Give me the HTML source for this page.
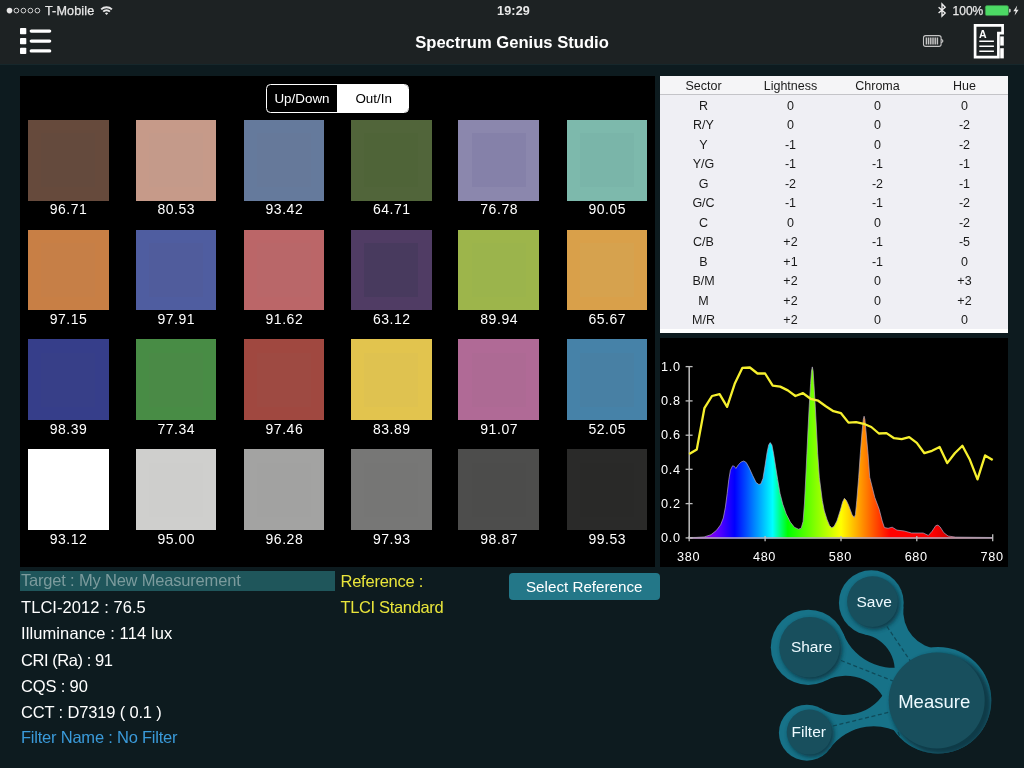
<!DOCTYPE html>
<html lang="en"><head><meta charset="utf-8"><title>Spectrum Genius Studio</title>
<style>
*{box-sizing:border-box;margin:0;padding:0}
html,body{width:1024px;height:768px;overflow:hidden;background:#0d1b1f;font-family:"Liberation Sans",sans-serif;color:#fff}
.abs,.sw,.sv,.tr,.th{position:absolute}
#top{position:absolute;left:0;top:0;width:1024px;height:64px;background:#1d2223}
#topline{position:absolute;left:0;top:64px;width:1024px;height:1px;background:#16272b}
.st{position:absolute;top:4px;font-size:12.6px;line-height:14px;color:#e8e8e8;white-space:nowrap;letter-spacing:0.12px;-webkit-text-stroke:0.25px #e8e8e8}
#title{position:absolute;left:0;width:1024px;top:32.5px;text-align:center;font-size:16.6px;line-height:20px;font-weight:bold;color:#fff}
#panel{position:absolute;left:20px;top:76px;width:634.5px;height:491px;background:#000}
.sw{width:80.8px;height:80.8px}
.sw i{position:absolute;left:13.4px;top:13.4px;width:54px;height:54px}
.sv{width:101px;text-align:center;font-size:14px;line-height:16px;color:#fff;letter-spacing:0.55px;text-indent:0.55px}
#seg{position:absolute;left:266px;top:84px;width:143px;height:29px;border:1px solid #fff;border-radius:4.5px;overflow:hidden;font-size:13.4px;line-height:27px}
#seg b{font-weight:normal;position:absolute;top:0;height:27px;text-align:center}
#seg .l{left:0;width:70px;color:#fff}
#seg .r{left:70px;width:71px;background:#fff;color:#000;padding-left:2.4px}
#table{position:absolute;left:660px;top:76px;width:348px;height:257px;background:#fff;overflow:hidden;color:#1a1a1a;font-size:12.5px}
#tbody{position:absolute;left:0;top:19px;width:348px;height:234px;background:#efeff4}
.th{left:0;top:0;width:348px;height:19px;background:#f5f5f7;border-bottom:1px solid #c4c4c8;line-height:19px}
.tr{left:0;width:348px;height:19.5px;line-height:19.5px}
.th span,.tr span{display:inline-block;width:87px;text-align:center;position:relative;top:1px}
#chart{position:absolute;left:660px;top:338px;width:348px;height:228.6px;background:#000}
.info{position:absolute;left:21px;font-size:16.5px;line-height:20px;white-space:nowrap;color:#fff}
#tgt{position:absolute;left:20px;top:571px;width:315px;height:20px;background:#1f565b}
#btn{position:absolute;left:508.5px;top:572.5px;width:151.5px;height:27.5px;border-radius:4px;background:#237788;color:#fff;font-size:15.2px;line-height:28.5px;text-align:center}
#wrap{position:absolute;left:0;top:0;width:1024px;height:768px;overflow:hidden;will-change:transform}
</style></head><body><div id="wrap">
<div id="top"></div><div id="topline"></div>
<!-- status bar -->
<svg class="abs" style="left:0;top:0" width="1024" height="20" viewBox="0 0 1024 20">
<circle cx="9.5" cy="10.6" r="2.8" fill="#e6e6e6"/>
<g fill="none" stroke="#e6e6e6" stroke-width="0.9"><circle cx="16.4" cy="10.6" r="2.35"/><circle cx="23.4" cy="10.6" r="2.35"/><circle cx="30.4" cy="10.6" r="2.35"/><circle cx="37.4" cy="10.6" r="2.35"/></g>
<g fill="none" stroke="#e6e6e6" stroke-width="1.9" stroke-linecap="butt"><path d="M101.2,9.4 A7.6,7.6 0 0 1 111.9,9.4"/><path d="M103.2,11.7 A4.7,4.7 0 0 1 109.9,11.7"/></g><path d="M104.9,13.3 A2.3,2.3 0 0 1 108.2,13.3 L106.55,15 Z" fill="#e6e6e6"/>
<path d="M938.6,7.2 L945.2,13 L942,16.2 L942,4 L945.2,7.2 L938.6,13" fill="none" stroke="#eeeeee" stroke-width="1.35" stroke-linejoin="miter"/>
<rect x="985.3" y="5.6" width="23.2" height="10" rx="1.6" fill="#4cd964"/><rect x="985.3" y="5.6" width="23.2" height="10" rx="1.6" fill="none" stroke="#3a8a48" stroke-width="0.6"/><path d="M1009.2,8.8 h0.6 a0.8,0.8 0 0 1 0.8,0.8 v2 a0.8,0.8 0 0 1 -0.8,0.8 h-0.6 z" fill="#e6e6e6"/>
<path d="M1017.2,5.6 L1013.3,11.3 L1015.7,11.3 L1014.6,15.6 L1018.6,9.8 L1016.2,9.8 Z" fill="#e6e6e6"/>
</svg>
<div class="st" style="left:45px">T-Mobile</div>
<div class="st" style="left:0;width:1027px;text-align:center;font-weight:bold;-webkit-text-stroke:0">19:29</div>
<div class="st" style="left:952.6px;font-size:12px;letter-spacing:0">100%</div>
<!-- nav -->
<svg class="abs" style="left:0;top:20px" width="1024" height="44" viewBox="0 20 1024 44">
<g fill="#fff"><rect x="20" y="28" width="6.3" height="6.3" rx="0.8"/><rect x="20" y="38" width="6.3" height="6.3" rx="0.8"/><rect x="20" y="47.8" width="6.3" height="6.3" rx="0.8"/>
<rect x="29.6" y="29.4" width="21.7" height="3.4" rx="1.7"/><rect x="29.6" y="39.4" width="21.7" height="3.4" rx="1.7"/><rect x="29.6" y="49.2" width="21.7" height="3.4" rx="1.7"/></g>
<g fill="none" stroke="#c4c4c4" stroke-width="1.1"><rect x="923.5" y="35.6" width="17.6" height="10.8" rx="2.2"/><path d="M941.1,39.2 l1.6,1 v1.6 l-1.6,1"/></g>
<g stroke="#c4c4c4" stroke-width="1.1"><path d="M926.4,37.6v6.8M928.6,37.6v6.8M930.8,37.6v6.8M933,37.6v6.8M935.2,37.6v6.8M937.4,37.6v6.8" stroke-width="1.5"/></g>
<path d="M975.1,25.3 H1002.6 V33.2 H998.4 V57.1 H975.1 Z" fill="none" stroke="#fff" stroke-width="2.7" stroke-linejoin="miter"/>
<g fill="#fff"><rect x="1000.2" y="36.4" width="3.6" height="9.2"/><rect x="1000.2" y="48.2" width="3.6" height="10.2"/></g>
<g stroke="#fff" stroke-width="1.6"><path d="M979.3,41.2h14.6M979.3,46.2h14.6M979.3,51.2h14.6"/></g>
<text x="982.8" y="37.6" font-family="Liberation Sans, sans-serif" font-weight="bold" font-size="10.5" fill="#fff" text-anchor="middle">A</text>
</svg>
<div id="title">Spectrum Genius Studio</div>
<!-- left panel -->
<div id="panel"></div>
<div id="seg"><b class="l">Up/Down</b><b class="r">Out/In</b></div>
<div class="sw" style="left:27.8px;top:120px;background:#664a3c"><i style="background:#644a3d"></i></div>
<div class="sv" style="left:17.8px;top:201.10000000000002px">96.71</div>
<div class="sw" style="left:135.5px;top:120px;background:#c69a89"><i style="background:#c49a8a"></i></div>
<div class="sv" style="left:125.5px;top:201.10000000000002px">80.53</div>
<div class="sw" style="left:243.6px;top:120px;background:#657a9c"><i style="background:#66799a"></i></div>
<div class="sv" style="left:233.6px;top:201.10000000000002px">93.42</div>
<div class="sw" style="left:351px;top:120px;background:#51653a"><i style="background:#4f6438"></i></div>
<div class="sv" style="left:341px;top:201.10000000000002px">64.71</div>
<div class="sw" style="left:458.4px;top:120px;background:#8b87ad"><i style="background:#8581a9"></i></div>
<div class="sv" style="left:448.4px;top:201.10000000000002px">76.78</div>
<div class="sw" style="left:566.5px;top:120px;background:#7db9ac"><i style="background:#7ab5a9"></i></div>
<div class="sv" style="left:556.5px;top:201.10000000000002px">90.05</div>
<div class="sw" style="left:27.8px;top:229.7px;background:#c87f45"><i style="background:#c67f47"></i></div>
<div class="sv" style="left:17.8px;top:310.8px">97.15</div>
<div class="sw" style="left:135.5px;top:229.7px;background:#4f5da0"><i style="background:#505c9c"></i></div>
<div class="sv" style="left:125.5px;top:310.8px">97.91</div>
<div class="sw" style="left:243.6px;top:229.7px;background:#bb6668"><i style="background:#b96769"></i></div>
<div class="sv" style="left:233.6px;top:310.8px">91.62</div>
<div class="sw" style="left:351px;top:229.7px;background:#503c64"><i style="background:#483a5e"></i></div>
<div class="sv" style="left:341px;top:310.8px">63.12</div>
<div class="sw" style="left:458.4px;top:229.7px;background:#9db54b"><i style="background:#9bb44c"></i></div>
<div class="sv" style="left:448.4px;top:310.8px">89.94</div>
<div class="sw" style="left:566.5px;top:229.7px;background:#d9a04a"><i style="background:#d6a24e"></i></div>
<div class="sv" style="left:556.5px;top:310.8px">65.67</div>
<div class="sw" style="left:27.8px;top:339.4px;background:#363e8a"><i style="background:#373f88"></i></div>
<div class="sv" style="left:17.8px;top:420.5px">98.39</div>
<div class="sw" style="left:135.5px;top:339.4px;background:#488c45"><i style="background:#4a8a46"></i></div>
<div class="sv" style="left:125.5px;top:420.5px">77.34</div>
<div class="sw" style="left:243.6px;top:339.4px;background:#a04840"><i style="background:#9e4a42"></i></div>
<div class="sv" style="left:233.6px;top:420.5px">97.46</div>
<div class="sw" style="left:351px;top:339.4px;background:#e2c44e"><i style="background:#dfc250"></i></div>
<div class="sv" style="left:341px;top:420.5px">83.89</div>
<div class="sw" style="left:458.4px;top:339.4px;background:#b06a96"><i style="background:#ad6a94"></i></div>
<div class="sv" style="left:448.4px;top:420.5px">91.07</div>
<div class="sw" style="left:566.5px;top:339.4px;background:#4682a8"><i style="background:#4880a4"></i></div>
<div class="sv" style="left:556.5px;top:420.5px">52.05</div>
<div class="sw" style="left:27.8px;top:449.4px;background:#ffffff"><i style="background:#ffffff"></i></div>
<div class="sv" style="left:17.8px;top:530.4999999999999px">93.12</div>
<div class="sw" style="left:135.5px;top:449.4px;background:#cfcfcd"><i style="background:#cececc"></i></div>
<div class="sv" style="left:125.5px;top:530.4999999999999px">95.00</div>
<div class="sw" style="left:243.6px;top:449.4px;background:#a3a3a2"><i style="background:#a2a2a1"></i></div>
<div class="sv" style="left:233.6px;top:530.4999999999999px">96.28</div>
<div class="sw" style="left:351px;top:449.4px;background:#777776"><i style="background:#767675"></i></div>
<div class="sv" style="left:341px;top:530.4999999999999px">97.93</div>
<div class="sw" style="left:458.4px;top:449.4px;background:#4d4d4c"><i style="background:#4c4c4b"></i></div>
<div class="sv" style="left:448.4px;top:530.4999999999999px">98.87</div>
<div class="sw" style="left:566.5px;top:449.4px;background:#2a2a29"><i style="background:#292928"></i></div>
<div class="sv" style="left:556.5px;top:530.4999999999999px">99.53</div>
<!-- table -->
<div id="table"><div id="tbody"></div>
<div class="th"><span>Sector</span><span>Lightness</span><span>Chroma</span><span>Hue</span></div>
<div class="tr" style="top:19.60px"><span>R</span><span>0</span><span>0</span><span>0</span></div>
<div class="tr" style="top:39.10px"><span>R/Y</span><span>0</span><span>0</span><span>-2</span></div>
<div class="tr" style="top:58.60px"><span>Y</span><span>-1</span><span>0</span><span>-2</span></div>
<div class="tr" style="top:78.10px"><span>Y/G</span><span>-1</span><span>-1</span><span>-1</span></div>
<div class="tr" style="top:97.60px"><span>G</span><span>-2</span><span>-2</span><span>-1</span></div>
<div class="tr" style="top:117.10px"><span>G/C</span><span>-1</span><span>-1</span><span>-2</span></div>
<div class="tr" style="top:136.60px"><span>C</span><span>0</span><span>0</span><span>-2</span></div>
<div class="tr" style="top:156.10px"><span>C/B</span><span>+2</span><span>-1</span><span>-5</span></div>
<div class="tr" style="top:175.60px"><span>B</span><span>+1</span><span>-1</span><span>0</span></div>
<div class="tr" style="top:195.10px"><span>B/M</span><span>+2</span><span>0</span><span>+3</span></div>
<div class="tr" style="top:214.60px"><span>M</span><span>+2</span><span>0</span><span>+2</span></div>
<div class="tr" style="top:234.10px"><span>M/R</span><span>+2</span><span>0</span><span>0</span></div>
</div>
<!-- chart -->
<div id="chart"></div>
<svg class="abs" style="left:0;top:0" width="1024" height="768" viewBox="0 0 1024 768">
<defs><linearGradient id="sg" gradientUnits="userSpaceOnUse" x1="689.2" x2="992.70" y1="0" y2="0"><stop offset="0.0000" stop-color="rgb(204,0,204)"/><stop offset="0.0125" stop-color="rgb(193,0,210)"/><stop offset="0.0250" stop-color="rgb(181,0,217)"/><stop offset="0.0375" stop-color="rgb(167,0,223)"/><stop offset="0.0500" stop-color="rgb(153,0,230)"/><stop offset="0.0625" stop-color="rgb(138,0,236)"/><stop offset="0.0750" stop-color="rgb(121,0,242)"/><stop offset="0.0875" stop-color="rgb(104,0,249)"/><stop offset="0.1000" stop-color="rgb(85,0,255)"/><stop offset="0.1125" stop-color="rgb(64,0,255)"/><stop offset="0.1250" stop-color="rgb(42,0,255)"/><stop offset="0.1375" stop-color="rgb(21,0,255)"/><stop offset="0.1500" stop-color="rgb(0,0,255)"/><stop offset="0.1625" stop-color="rgb(0,26,255)"/><stop offset="0.1750" stop-color="rgb(0,51,255)"/><stop offset="0.1875" stop-color="rgb(0,76,255)"/><stop offset="0.2000" stop-color="rgb(0,102,255)"/><stop offset="0.2125" stop-color="rgb(0,128,255)"/><stop offset="0.2250" stop-color="rgb(0,153,255)"/><stop offset="0.2375" stop-color="rgb(0,178,255)"/><stop offset="0.2500" stop-color="rgb(0,204,255)"/><stop offset="0.2625" stop-color="rgb(0,230,255)"/><stop offset="0.2750" stop-color="rgb(0,255,255)"/><stop offset="0.2875" stop-color="rgb(0,255,191)"/><stop offset="0.3000" stop-color="rgb(0,255,128)"/><stop offset="0.3125" stop-color="rgb(0,255,64)"/><stop offset="0.3250" stop-color="rgb(0,255,0)"/><stop offset="0.3375" stop-color="rgb(18,255,0)"/><stop offset="0.3500" stop-color="rgb(36,255,0)"/><stop offset="0.3625" stop-color="rgb(55,255,0)"/><stop offset="0.3750" stop-color="rgb(73,255,0)"/><stop offset="0.3875" stop-color="rgb(91,255,0)"/><stop offset="0.4000" stop-color="rgb(109,255,0)"/><stop offset="0.4125" stop-color="rgb(128,255,0)"/><stop offset="0.4250" stop-color="rgb(146,255,0)"/><stop offset="0.4375" stop-color="rgb(164,255,0)"/><stop offset="0.4500" stop-color="rgb(182,255,0)"/><stop offset="0.4625" stop-color="rgb(200,255,0)"/><stop offset="0.4750" stop-color="rgb(219,255,0)"/><stop offset="0.4875" stop-color="rgb(237,255,0)"/><stop offset="0.5000" stop-color="rgb(255,255,0)"/><stop offset="0.5125" stop-color="rgb(255,235,0)"/><stop offset="0.5250" stop-color="rgb(255,216,0)"/><stop offset="0.5375" stop-color="rgb(255,196,0)"/><stop offset="0.5500" stop-color="rgb(255,177,0)"/><stop offset="0.5625" stop-color="rgb(255,157,0)"/><stop offset="0.5750" stop-color="rgb(255,137,0)"/><stop offset="0.5875" stop-color="rgb(255,118,0)"/><stop offset="0.6000" stop-color="rgb(255,98,0)"/><stop offset="0.6125" stop-color="rgb(255,78,0)"/><stop offset="0.6250" stop-color="rgb(255,59,0)"/><stop offset="0.6375" stop-color="rgb(255,39,0)"/><stop offset="0.6500" stop-color="rgb(255,20,0)"/><stop offset="0.6625" stop-color="rgb(255,0,0)"/><stop offset="0.6750" stop-color="rgb(255,0,0)"/><stop offset="0.6875" stop-color="rgb(255,0,0)"/><stop offset="0.7000" stop-color="rgb(255,0,0)"/><stop offset="0.7125" stop-color="rgb(255,0,0)"/><stop offset="0.7250" stop-color="rgb(255,0,0)"/><stop offset="0.7375" stop-color="rgb(255,0,0)"/><stop offset="0.7500" stop-color="rgb(255,0,0)"/><stop offset="0.7625" stop-color="rgb(255,0,0)"/><stop offset="0.7750" stop-color="rgb(255,0,0)"/><stop offset="0.7875" stop-color="rgb(255,0,0)"/><stop offset="0.8000" stop-color="rgb(255,0,0)"/><stop offset="0.8125" stop-color="rgb(244,0,0)"/><stop offset="0.8250" stop-color="rgb(233,0,0)"/><stop offset="0.8375" stop-color="rgb(222,0,0)"/><stop offset="0.8500" stop-color="rgb(210,0,0)"/><stop offset="0.8625" stop-color="rgb(199,0,0)"/><stop offset="0.8750" stop-color="rgb(188,0,0)"/><stop offset="0.8875" stop-color="rgb(177,0,0)"/><stop offset="0.9000" stop-color="rgb(166,0,0)"/><stop offset="0.9125" stop-color="rgb(155,0,0)"/><stop offset="0.9250" stop-color="rgb(143,0,0)"/><stop offset="0.9375" stop-color="rgb(132,0,0)"/><stop offset="0.9500" stop-color="rgb(121,0,0)"/><stop offset="0.9625" stop-color="rgb(110,0,0)"/><stop offset="0.9750" stop-color="rgb(99,0,0)"/><stop offset="0.9875" stop-color="rgb(88,0,0)"/><stop offset="1.0000" stop-color="rgb(76,0,0)"/></linearGradient></defs>
<path d="M689.2,538.4 L689.2,537.5 L696.0,537.4 L704.2,536.9 L711.0,534.7 L716.5,530.3 L720.6,524.8 L723.3,518.0 L725.4,507.1 L727.2,493.4 L728.8,479.7 L730.4,470.2 L732.6,465.8 L734.3,466.3 L735.9,468.5 L738.4,464.7 L741.1,462.0 L743.8,461.0 L746.3,462.6 L749.3,468.1 L752.7,475.6 L756.1,482.5 L758.9,484.5 L760.9,483.8 L763.0,478.4 L765.0,466.1 L767.1,452.4 L768.7,444.9 L770.2,442.6 L771.9,444.9 L773.6,453.8 L775.5,466.1 L777.7,479.7 L780.0,493.4 L782.8,504.3 L786.2,513.9 L790.3,522.1 L794.4,527.3 L798.5,529.2 L801.2,528.2 L803.1,521.5 L804.5,503.0 L805.8,477.0 L806.9,453.8 L808.0,430.0 L809.2,406.9 L810.6,383.4 L811.5,371.0 L812.3,366.9 L813.1,371.0 L813.9,383.4 L815.3,406.9 L816.5,430.0 L817.7,453.8 L819.3,477.2 L822.3,500.6 L824.3,510.8 L827.0,519.4 L829.5,525.5 L831.7,527.8 L834.0,526.5 L836.9,521.0 L840.4,510.0 L842.6,502.0 L844.4,498.3 L846.4,500.5 L848.6,505.3 L852.1,514.7 L854.2,517.5 L855.4,514.7 L856.8,500.6 L858.7,477.2 L860.3,453.8 L862.2,430.3 L863.3,419.5 L864.1,416.2 L864.9,419.5 L865.9,430.3 L868.0,453.8 L869.7,477.2 L870.9,481.9 L874.8,497.5 L879.2,509.3 L882.2,521.0 L884.4,527.6 L888.1,528.3 L892.2,527.2 L896.9,530.1 L904.2,531.0 L911.5,533.0 L923.2,533.0 L928.4,535.4 L932.0,531.3 L935.7,525.7 L937.9,525.1 L940.1,526.9 L943.8,532.7 L948.1,536.0 L955.5,537.1 L992.3,537.5 L992.3,538.4 Z" fill="url(#sg)"/>
<path d="M689.2,537.5 L696.0,537.4 L704.2,536.9 L711.0,534.7 L716.5,530.3 L720.6,524.8 L723.3,518.0 L725.4,507.1 L727.2,493.4 L728.8,479.7 L730.4,470.2 L732.6,465.8 L734.3,466.3 L735.9,468.5 L738.4,464.7 L741.1,462.0 L743.8,461.0 L746.3,462.6 L749.3,468.1 L752.7,475.6 L756.1,482.5 L758.9,484.5 L760.9,483.8 L763.0,478.4 L765.0,466.1 L767.1,452.4 L768.7,444.9 L770.2,442.6 L771.9,444.9 L773.6,453.8 L775.5,466.1 L777.7,479.7 L780.0,493.4 L782.8,504.3 L786.2,513.9 L790.3,522.1 L794.4,527.3 L798.5,529.2 L801.2,528.2 L803.1,521.5 L804.5,503.0 L805.8,477.0 L806.9,453.8 L808.0,430.0 L809.2,406.9 L810.6,383.4 L811.5,371.0 L812.3,366.9 L813.1,371.0 L813.9,383.4 L815.3,406.9 L816.5,430.0 L817.7,453.8 L819.3,477.2 L822.3,500.6 L824.3,510.8 L827.0,519.4 L829.5,525.5 L831.7,527.8 L834.0,526.5 L836.9,521.0 L840.4,510.0 L842.6,502.0 L844.4,498.3 L846.4,500.5 L848.6,505.3 L852.1,514.7 L854.2,517.5 L855.4,514.7 L856.8,500.6 L858.7,477.2 L860.3,453.8 L862.2,430.3 L863.3,419.5 L864.1,416.2 L864.9,419.5 L865.9,430.3 L868.0,453.8 L869.7,477.2 L870.9,481.9 L874.8,497.5 L879.2,509.3 L882.2,521.0 L884.4,527.6 L888.1,528.3 L892.2,527.2 L896.9,530.1 L904.2,531.0 L911.5,533.0 L923.2,533.0 L928.4,535.4 L932.0,531.3 L935.7,525.7 L937.9,525.1 L940.1,526.9 L943.8,532.7 L948.1,536.0 L955.5,537.1 L992.3,537.5" fill="none" stroke="#b8a8c8" stroke-opacity="0.75" stroke-width="0.9" stroke-linejoin="round"/>
<g stroke="#bdbdbd" stroke-width="1.5" font-family="Liberation Sans, sans-serif" font-size="12.7" letter-spacing="0.65" fill="#fff">
<line x1="689.2" x2="689.2" y1="366" y2="538.6"/>
<line x1="688.5" x2="992.7" y1="537.9" y2="537.9" stroke="#b9aebf"/>
<g stroke-width="1.3"><line x1="685.6" x2="692.6" y1="366.6" y2="366.6"/><text stroke="none" x="680.6" y="370.8" text-anchor="end">1.0</text><line x1="685.6" x2="692.6" y1="400.9" y2="400.9"/><text stroke="none" x="680.6" y="405.1" text-anchor="end">0.8</text><line x1="685.6" x2="692.6" y1="435.2" y2="435.2"/><text stroke="none" x="680.6" y="439.4" text-anchor="end">0.6</text><line x1="685.6" x2="692.6" y1="469.3" y2="469.3"/><text stroke="none" x="680.6" y="473.5" text-anchor="end">0.4</text><line x1="685.6" x2="692.6" y1="503.6" y2="503.6"/><text stroke="none" x="680.6" y="507.8" text-anchor="end">0.2</text><line x1="685.6" x2="692.6" y1="537.9" y2="537.9"/><text stroke="none" x="680.6" y="542.1" text-anchor="end">0.0</text><line x1="689.2" x2="689.2" y1="536" y2="541.2"/><text stroke="none" x="688.6" y="561.4" text-anchor="middle">380</text><line x1="765.1" x2="765.1" y1="536" y2="541.2"/><text stroke="none" x="764.5" y="561.4" text-anchor="middle">480</text><line x1="841.0" x2="841.0" y1="536" y2="541.2"/><text stroke="none" x="840.4" y="561.4" text-anchor="middle">580</text><line x1="916.8" x2="916.8" y1="536" y2="541.2"/><text stroke="none" x="916.2" y="561.4" text-anchor="middle">680</text><line x1="992.7" x2="992.7" y1="534.2" y2="541.2"/><text stroke="none" x="992.1" y="561.4" text-anchor="middle">780</text></g>
</g>
<polyline points="689.2,454.1 696.8,449.4 704.4,408.2 712.0,396.0 719.6,394.1 727.1,406.9 734.7,383.8 742.3,367.9 749.9,367.5 757.5,373.5 765.1,373.5 772.7,385.7 780.2,386.6 787.8,390.4 795.4,396.0 803.0,393.2 810.6,398.8 818.2,400.7 825.8,406.3 833.4,411.2 841.0,413.2 848.5,422.6 856.1,422.2 863.7,423.8 871.3,427.0 878.9,433.5 886.5,433.1 894.1,438.2 901.7,439.1 909.2,437.2 916.8,442.9 924.4,453.2 932.0,450.8 939.6,447.0 947.2,463.1 954.8,453.2 962.4,445.7 969.9,459.8 977.5,479.4 985.1,455.4 992.7,460.1" fill="none" stroke="#f6f02e" stroke-width="2.3" stroke-linejoin="round" stroke-linecap="butt"/>
</svg>
<!-- info -->
<div id="tgt"></div>
<div class="info" style="top:570.2px;color:#7c9b9d;letter-spacing:-0.19px">Target : My New Measurement</div>
<div class="info" style="top:597px;letter-spacing:0.06px">TLCI-2012 : 76.5</div>
<div class="info" style="top:623.4px;letter-spacing:0.1px">Illuminance : 114 lux</div>
<div class="info" style="top:649.5px;letter-spacing:-0.44px">CRI (Ra) : 91</div>
<div class="info" style="top:675.8px;letter-spacing:-0.15px">CQS : 90</div>
<div class="info" style="top:702.2px;letter-spacing:-0.16px">CCT : D7319 ( 0.1 )</div>
<div class="info" style="top:727.3px;color:#3a9ad9;letter-spacing:-0.22px">Filter Name : No Filter</div>
<div class="info" style="left:340.5px;top:571px;color:#e9e53b;letter-spacing:-0.24px">Reference :</div>
<div class="info" style="left:340.5px;top:597px;color:#e9e53b;letter-spacing:-0.35px">TLCI Standard</div>
<div id="btn">Select Reference</div>
<svg class="abs" style="left:0;top:0" width="1024" height="768" viewBox="0 0 1024 768">
<defs>
<filter id="sh" x="-30%" y="-30%" width="160%" height="160%"><feGaussianBlur stdDeviation="2.2"/></filter>
<clipPath id="bc"><circle cx="938.0" cy="700.3" r="53.3"/><circle cx="871.3" cy="602.7" r="32.4"/><circle cx="808.4" cy="647.3" r="37.6"/><circle cx="806.9" cy="732.7" r="28.0"/><path d="M865.14,634.47 A36.50,36.50 0 0 1 892.37,683.14 L938.0,700.3 L940.11,649.47 A38.50,38.50 0 0 1 903.46,606.49 L871.3,602.7 Z"/><path d="M843.43,633.68 A53.50,53.50 0 0 0 917.97,661.77 L938.0,700.3 L888.41,710.46 A43.50,43.50 0 0 0 825.73,680.61 L808.4,647.3 Z"/><path d="M821.11,708.57 A46.50,46.50 0 0 0 888.71,683.50 L938.0,700.3 L907.53,738.21 A54.00,54.00 0 0 0 829.72,748.96 L806.9,732.7 Z"/></clipPath>
</defs>
<g fill="#177288"><circle cx="938.0" cy="700.3" r="53.3"/><circle cx="871.3" cy="602.7" r="32.4"/><circle cx="808.4" cy="647.3" r="37.6"/><circle cx="806.9" cy="732.7" r="28.0"/><path d="M865.14,634.47 A36.50,36.50 0 0 1 892.37,683.14 L938.0,700.3 L940.11,649.47 A38.50,38.50 0 0 1 903.46,606.49 L871.3,602.7 Z"/><path d="M843.43,633.68 A53.50,53.50 0 0 0 917.97,661.77 L938.0,700.3 L888.41,710.46 A43.50,43.50 0 0 0 825.73,680.61 L808.4,647.3 Z"/><path d="M821.11,708.57 A46.50,46.50 0 0 0 888.71,683.50 L938.0,700.3 L907.53,738.21 A54.00,54.00 0 0 0 829.72,748.96 L806.9,732.7 Z"/></g>
<g clip-path="url(#bc)">
<g fill="none" stroke="#0f4b5a" stroke-width="1.25" stroke-dasharray="4 2.6">
<path d="M887,626.5 L911,662"/><path d="M841,660.5 L893,681"/><path d="M833,726 L890,712"/><path d="M898,732 L903,745"/>
</g>
<g fill="#0b323c" opacity="0.85" filter="url(#sh)">
<circle cx="941" cy="704" r="50.2"/><circle cx="874.4" cy="603.8" r="25.6"/><circle cx="811.6" cy="649.6" r="30.6"/><circle cx="811.2" cy="734.2" r="22.8"/>
</g>
</g>
<g fill="#184f5d">
<circle cx="936.7" cy="700.4" r="48"/><circle cx="872.5" cy="601.6" r="25.4"/><circle cx="809.6" cy="647.3" r="30.3"/><circle cx="809.3" cy="732.1" r="22.5"/>
</g>
<g font-family="Liberation Sans, sans-serif" fill="#eefaff" text-anchor="middle">
<text x="934.2" y="707.7" font-size="18.5">Measure</text>
<text x="874.2" y="606.8" font-size="15.5">Save</text>
<text x="811.6" y="651.6" font-size="15.5">Share</text>
<text x="808.7" y="737" font-size="15.5">Filter</text>
</g>
</svg>
</div></body></html>
